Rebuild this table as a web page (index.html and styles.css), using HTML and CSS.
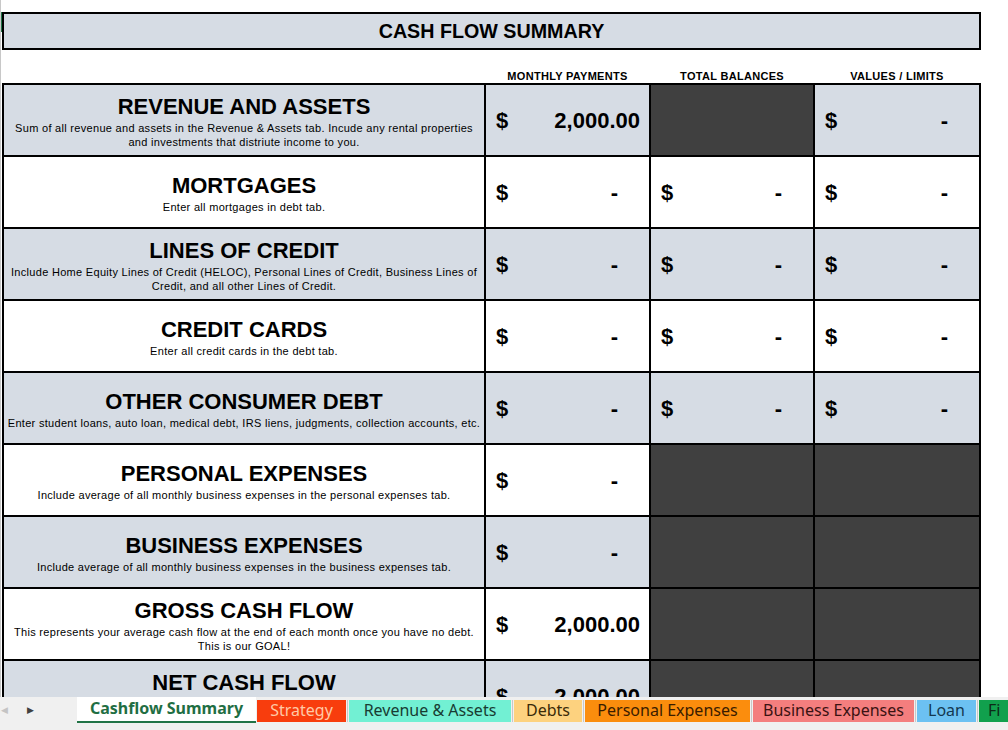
FILE: index.html
```html
<!DOCTYPE html>
<html>
<head>
<meta charset="utf-8">
<link rel="stylesheet" href="styles.css">
</head>
<body>
<div class="app">
  <div class="sheet">
    <div class="row-marker"></div>
    <div class="title">CASH FLOW SUMMARY</div>
    <div class="colheads">
      <div></div>
      <div>MONTHLY PAYMENTS</div>
      <div>TOTAL BALANCES</div>
      <div>VALUES / LIMITS</div>
    </div>
    <div class="grid">
      <div class="lbl gray"><div class="lt">REVENUE AND ASSETS</div><div class="ld">Sum of all revenue and assets in the Revenue &amp; Assets tab. Incude any rental properties<br>and investments that distriute income to you.</div></div>
      <div class="money gray"><span>$</span><span>2,000.00</span></div>
      <div class="dark"></div>
      <div class="money gray dash"><span>$</span><span>-</span></div>

      <div class="lbl"><div class="lt">MORTGAGES</div><div class="ld">Enter all mortgages in debt tab.</div></div>
      <div class="money dash"><span>$</span><span>-</span></div>
      <div class="money dash"><span>$</span><span>-</span></div>
      <div class="money dash"><span>$</span><span>-</span></div>

      <div class="lbl gray"><div class="lt">LINES OF CREDIT</div><div class="ld">Include Home Equity Lines of Credit (HELOC), Personal Lines of Credit, Business Lines of<br>Credit, and all other Lines of Credit.</div></div>
      <div class="money gray dash"><span>$</span><span>-</span></div>
      <div class="money gray dash"><span>$</span><span>-</span></div>
      <div class="money gray dash"><span>$</span><span>-</span></div>

      <div class="lbl"><div class="lt">CREDIT CARDS</div><div class="ld">Enter all credit cards in the debt tab.</div></div>
      <div class="money dash"><span>$</span><span>-</span></div>
      <div class="money dash"><span>$</span><span>-</span></div>
      <div class="money dash"><span>$</span><span>-</span></div>

      <div class="lbl gray"><div class="lt">OTHER CONSUMER DEBT</div><div class="ld">Enter student loans, auto loan, medical debt, IRS liens, judgments, collection accounts, etc.</div></div>
      <div class="money gray dash"><span>$</span><span>-</span></div>
      <div class="money gray dash"><span>$</span><span>-</span></div>
      <div class="money gray dash"><span>$</span><span>-</span></div>

      <div class="lbl"><div class="lt">PERSONAL EXPENSES</div><div class="ld">Include average of all monthly business expenses in the personal expenses tab.</div></div>
      <div class="money dash"><span>$</span><span>-</span></div>
      <div class="dark"></div>
      <div class="dark"></div>

      <div class="lbl gray"><div class="lt">BUSINESS EXPENSES</div><div class="ld">Include average of all monthly business expenses in the business expenses tab.</div></div>
      <div class="money gray dash"><span>$</span><span>-</span></div>
      <div class="dark"></div>
      <div class="dark"></div>

      <div class="lbl"><div class="lt">GROSS CASH FLOW</div><div class="ld">This represents your average cash flow at the end of each month once you have no debt.<br>This is our GOAL!</div></div>
      <div class="money"><span>$</span><span>2,000.00</span></div>
      <div class="dark"></div>
      <div class="dark"></div>

      <div class="lbl gray"><div class="lt">NET CASH FLOW</div><div class="ld-space"></div></div>
      <div class="money gray"><span>$</span><span>2,000.00</span></div>
      <div class="dark"></div>
      <div class="dark"></div>
    </div>
  </div>
  <div class="tabbar">
    <div class="nav">
      <span class="arrow prev">&#9664;</span>
      <span class="arrow next">&#9654;</span>
    </div>
    <div class="tab active">Cashflow Summary</div>
    <div class="tab t-strategy">Strategy</div>
    <div class="sep"></div>
    <div class="tab t-revenue">Revenue &amp; Assets</div>
    <div class="sep"></div>
    <div class="tab t-debts">Debts</div>
    <div class="sep"></div>
    <div class="tab t-personal">Personal Expenses</div>
    <div class="sep"></div>
    <div class="tab t-business">Business Expenses</div>
    <div class="sep"></div>
    <div class="tab t-loan">Loan</div>
    <div class="sep"></div>
    <div class="tab t-fin">Fi</div>
  </div>
</div>
</body>
</html>
```

FILE: styles.css
```css
html, body {
  margin: 0;
  padding: 0;
  background: #ffffff;
}

.app {
  width: 1008px;
  height: 730px;
  display: flex;
  flex-direction: column;
  overflow: hidden;
  font-family: "Liberation Sans", Arial, sans-serif;
  color: #000;
}

.sheet {
  position: relative;
  height: 697px;
  flex: none;
  overflow: hidden;
  padding: 12px 0 0 1px;
  box-sizing: border-box;
  border-left: 1px solid #c8c8c8;
}

.row-marker {
  position: absolute;
  left: -1px;
  top: 12px;
  width: 2px;
  height: 20px;
  background: #217346;
}

.title {
  width: 979px;
  height: 38px;
  box-sizing: border-box;
  border: 2px solid #000;
  background: #d6dce4;
  display: flex;
  align-items: center;
  justify-content: center;
  font-weight: bold;
  font-size: 19.7px;
  padding-top: 1px;
}

.colheads {
  display: grid;
  grid-template-columns: 480px 163px 162px 164px;
  column-gap: 2px;
  padding: 0 2px;
  height: 33px;
  align-items: end;
  font-weight: bold;
  font-size: 11px;
  letter-spacing: 0.3px;
  text-align: center;
}

.colheads div {
  padding-bottom: 1px;
}

.grid {
  display: grid;
  grid-template-columns: 480px 163px 162px 164px;
  grid-auto-rows: 70px;
  gap: 2px;
  padding: 2px;
  background: #000;
  width: 979px;
  box-sizing: border-box;
}

.grid > div {
  background: #ffffff;
}

.grid > .gray {
  background: #d6dce4;
}

.grid > .dark {
  background: #404040;
}

.lbl {
  display: flex;
  flex-direction: column;
  justify-content: center;
  align-items: center;
  text-align: center;
  padding-top: 2px;
  box-sizing: border-box;
}

.lt {
  font-weight: bold;
  font-size: 22px;
  line-height: 28px;
}

.ld {
  font-size: 11px;
  line-height: 14px;
  letter-spacing: 0.3px;
}

.ld-space {
  height: 28px;
}

.money {
  display: flex;
  justify-content: space-between;
  align-items: center;
  padding: 2px 9px 0 10px;
  box-sizing: border-box;
  font-weight: bold;
  font-size: 22px;
}

.money.dash {
  padding-right: 31px;
}

.tabbar {
  flex: 1;
  background: #f0f0f0;
  display: flex;
  align-items: flex-start;
  font-family: "Noto Sans", "Open Sans", sans-serif;
  font-size: 16px;
}

.nav {
  width: 77px;
  height: 26px;
  display: flex;
  align-items: center;
  flex: none;
}

.arrow {
  font-size: 9px;
  font-family: "DejaVu Sans", sans-serif;
}

.prev {
  color: #c4c4c4;
  margin-left: 1px;
}

.next {
  color: #404040;
  margin-left: 19px;
}

.tab {
  height: 22px;
  margin-top: 3px;
  line-height: 20px;
  padding: 0;
  text-align: center;
  white-space: nowrap;
  overflow: hidden;
  color: #2a2a2a;
  flex: none;
}

.tab.active {
  margin-top: 0;
  height: 24px;
  line-height: 23px;
  background: #ffffff;
  color: #1f6e43;
  font-weight: bold;
  border-bottom: 2px solid #217346;
  width: 179px;
}

.sep {
  width: 1px;
  height: 22px;
  margin: 3px 1px 0;
  background: #c8c8c8;
  flex: none;
}

.t-strategy {
  background: #f83d0d;
  color: #ffc9a6;
  margin-left: 1px;
  width: 89px;
}

.t-revenue {
  background: #72f0d3;
  color: #183c32;
  width: 162px;
}

.t-debts {
  background: #fdd27f;
  color: #3a2a08;
  width: 68px;
}

.t-personal {
  background: #fb8d0d;
  color: #3a1c00;
  width: 165px;
}

.t-business {
  background: #f47e7e;
  color: #3a1212;
  width: 161px;
}

.t-loan {
  background: #6cc1f2;
  color: #143850;
  width: 59px;
}

.t-fin {
  background: #11a04d;
  color: #0c2a18;
  width: 40px;
  text-align: left;
  padding-left: 9px;
}
```
